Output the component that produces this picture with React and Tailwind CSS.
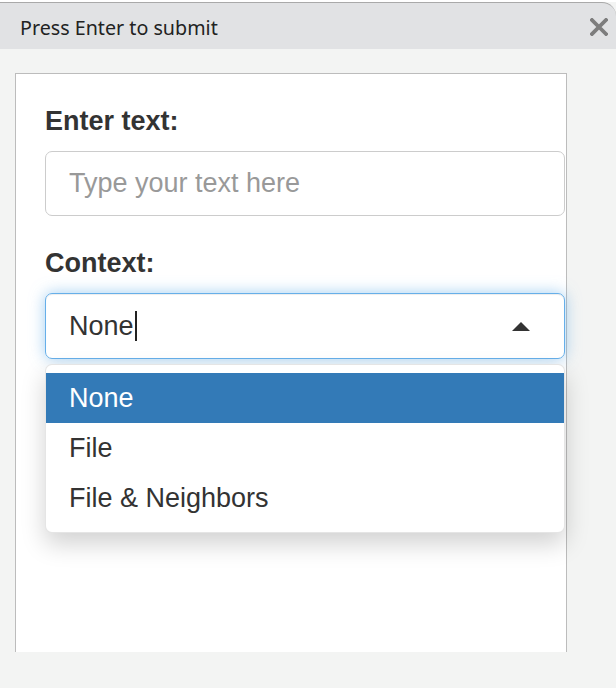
import React from "react";

const options = ["None", "File", "File & Neighbors"];

const App = () => {
  return (
    <div className="w-[616px] h-[688px] overflow-hidden bg-[#f3f4f3] font-['Liberation_Sans',Arial,sans-serif] text-[#333]">
      <div className="h-[2px] bg-white" />
      <div className="h-[47px] bg-[#e1e2e4] border-t border-[#a9a9a9] rounded-tr-[14px] flex items-center justify-between pl-[20px] pr-[8px]">
        <span className="font-['Noto_Sans',sans-serif] text-[19.7px] text-[#222] leading-none pt-[4px]">
          Press Enter to submit
        </span>
        <svg width="18" height="18" viewBox="0 0 18 18" className="mt-[2px]">
          <path d="M2 2 L16 16 M16 2 L2 16" stroke="#7d7d7d" strokeWidth="3.8" strokeLinecap="square" />
        </svg>
      </div>
      <div className="pt-[24px] pl-[15px]">
        <div className="w-[552px] h-[579px] bg-white border-x border-t border-[#bcbcbc] pt-[29px] pl-[29px]">
          <div className="w-[520px]">
            <label className="block text-[27px] font-bold leading-[37.5px] mb-[10px]">Enter text:</label>
            <input
              type="text"
              placeholder="Type your text here"
              className="block w-full h-[65px] border border-[#ccc] rounded-[7px] px-[23px] text-[27px] placeholder:text-[#999] outline-none"
            />
            <label className="block text-[27px] font-bold leading-[37.5px] mt-[29px] mb-[11px]">Context:</label>
            <div className="relative">
              <div className="h-[66px] border border-[#66afe9] rounded-[7px] shadow-[inset_0_1px_1px_rgba(0,0,0,0.075),0_0_15px_rgba(102,175,233,0.6)] flex items-center pl-[23px] pr-[34px]">
                <span className="text-[27px] leading-none">None</span>
                <span className="w-[2px] h-[30px] bg-[#222] ml-[1px]" />
                <span className="ml-auto w-0 h-0 border-x-[9px] border-x-transparent border-b-[9px] border-b-[#333]" />
              </div>
              <div className="absolute left-0 right-0 top-[71px] bg-white border border-[rgba(0,0,0,0.1)] rounded-[7px] pt-[8px] pb-[9px] shadow-[0_11px_24px_rgba(0,0,0,0.18)]">
                {options.map((opt, i) => (
                  <div
                    key={opt}
                    className={
                      i === 0
                        ? "h-[50px] flex items-center pl-[23px] text-[27px] bg-[#337ab7] text-white"
                        : "h-[50px] flex items-center pl-[23px] text-[27px]"
                    }
                  >
                    {opt}
                  </div>
                ))}
              </div>
            </div>
          </div>
        </div>
      </div>
    </div>
  );
};

export default App;
